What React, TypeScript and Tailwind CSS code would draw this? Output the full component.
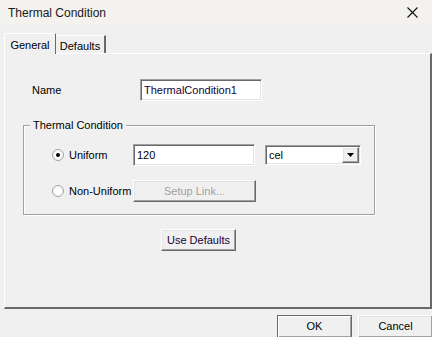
import React from "react";

const sunken =
  "border border-t-[#a0a0a0] border-l-[#a0a0a0] border-r-white border-b-white shadow-[inset_1px_1px_0_#696969,inset_-1px_-1px_0_#e3e3e3] bg-white";
const raised =
  "border border-t-white border-l-white border-r-[#696969] border-b-[#696969] shadow-[inset_-1px_-1px_0_#a0a0a0,inset_1px_1px_0_#e3e3e3] bg-[#f0f0f0]";

const Radio = ({ checked }: { checked?: boolean }) => (
  <svg width="12" height="12" viewBox="0 0 12 12" className="shrink-0">
    <circle cx="6" cy="6" r="5.5" fill="#fff" stroke="#a0a0a0" />
    <circle cx="6" cy="6" r="4.5" fill="none" stroke="#e3e3e3" strokeWidth="0.8" />
    {checked && <circle cx="6" cy="6" r="2" fill="#000" />}
  </svg>
);

const App: React.FC = () => {
  return (
    <div className="w-[432px] h-[337px] bg-[#f0f0f0] flex flex-col overflow-hidden text-[11px] text-black font-['Liberation_Sans',Arial,sans-serif]">
      {/* title bar */}
      <div className="h-[25px] shrink-0 bg-[#f3f2ee] flex items-center justify-between pl-[8px] pr-[14px]">
        <span className="text-[12px] text-[#1a1a1a]">Thermal Condition</span>
        <svg width="11" height="11" viewBox="0 0 11 11">
          <path d="M0.5 0.5L10.5 10.5M10.5 0.5L0.5 10.5" stroke="#111" strokeWidth="1.1" />
        </svg>
      </div>

      {/* tabs */}
      <div className="flex items-end pl-[4px] h-[28px] shrink-0 relative z-10">
        <div className="h-[21px] w-[52px] flex items-start justify-center pt-[3px] border-t border-l border-white border-r border-r-[#696969] bg-[#f0f0f0] mb-[-1px] pb-[1px]">
          General
        </div>
        <div className="h-[18px] w-[50px] flex items-start justify-center pt-[2px] border-t border-white border-r-2 border-r-[#696969]">
          Defaults
        </div>
      </div>

      {/* panel */}
      <div className="ml-[4px] w-[428px] h-[256px] shrink-0 border-t border-l border-white border-r-2 border-b-2 border-r-[#696969] border-b-[#696969] flex flex-col pt-[25px] pl-[18px]">
        <div className="flex items-center pl-[9px]">
          <span className="w-[108px]">Name</span>
          <div className={`${sunken} w-[122px] h-[22px] flex items-center px-[3px] text-[#1a0033]`}>
            ThermalCondition1
          </div>
        </div>

        {/* group box */}
        <div className="relative mt-[24px] w-[352px] h-[90px] border border-[#a0a0a0] shadow-[1px_1px_0_#fff,inset_1px_1px_0_#fff] flex flex-col pt-[18px]">
          <span className="absolute left-[6px] top-[-7px] px-[3px] bg-[#f0f0f0] leading-[13px]">
            Thermal Condition
          </span>
          <div className="flex items-center">
            <div className="w-[109px] flex items-center pl-[28px] gap-[5px]">
              <Radio checked />
              <span>Uniform</span>
            </div>
            <div className={`${sunken} w-[122px] h-[22px] flex items-center px-[3px]`}>120</div>
            <div className={`${sunken} ml-[10px] w-[96px] h-[20px] flex items-center justify-between pl-[3px] pr-[1px]`}>
              <span>cel</span>
              <div className={`${raised} w-[17px] h-[16px] flex items-center justify-center`}>
                <svg width="7" height="4" viewBox="0 0 7 4">
                  <path d="M0 0H7L3.5 4Z" fill="#000" />
                </svg>
              </div>
            </div>
          </div>
          <div className="flex items-center mt-[14px]">
            <div className="w-[109px] flex items-center pl-[28px] gap-[5px]">
              <Radio />
              <span>Non-Uniform</span>
            </div>
            <div className={`${raised} w-[123px] h-[22px] flex items-center justify-center text-[#a0a0a0]`}>
              Setup Link...
            </div>
          </div>
        </div>

        <div className={`${raised} ml-[138px] mt-[14px] w-[75px] h-[22px] flex items-center justify-center text-[#1a0033]`}>
          Use Defaults
        </div>
      </div>

      {/* bottom buttons */}
      <div className="flex justify-end gap-[6px] mt-[6px] mr-[-1px]">
        <div className="w-[75px] h-[23px] border border-[#696969] bg-[#f0f0f0] shadow-[inset_1px_1px_0_#fff,inset_-1px_-1px_0_#a0a0a0] flex items-center justify-center">
          OK
        </div>
        <div className={`${raised} w-[75px] h-[23px] flex items-center justify-center`}>Cancel</div>
      </div>
    </div>
  );
};

export default App;
